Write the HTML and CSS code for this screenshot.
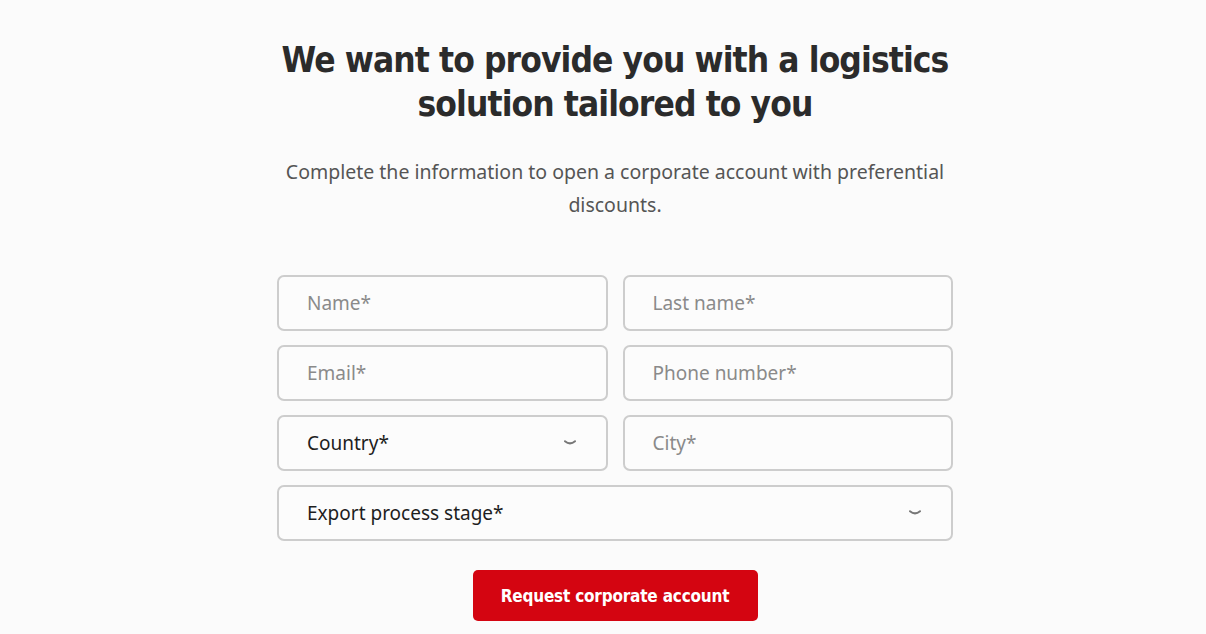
FILE: index.html
```html
<!DOCTYPE html>
<html lang="en">
<head>
<meta charset="utf-8">
<title>Corporate account</title>
<link rel="stylesheet" href="styles.css">
</head>
<body>
<main class="page">
  <section class="signup">
    <h1 class="title">We want to provide you with a logistics solution tailored to you</h1>
    <p class="lead">Complete the information to open a corporate account with preferential discounts.</p>
    <form class="form">
      <div class="grid">
        <input class="field" type="text" placeholder="Name*">
        <input class="field" type="text" placeholder="Last name*">
        <input class="field" type="email" placeholder="Email*">
        <input class="field" type="tel" placeholder="Phone number*">
        <div class="field select"><span>Country*</span>
          <svg class="chev" width="12" height="6" viewBox="0 0 12 6"><path d="M1 1.2 Q6 5.5 11 1.2" fill="none" stroke="#777" stroke-width="2" stroke-linecap="round"/></svg>
        </div>
        <input class="field" type="text" placeholder="City*">
        <div class="field select wide"><span>Export process stage*</span>
          <svg class="chev" width="12" height="6" viewBox="0 0 12 6"><path d="M1 1.2 Q6 5.5 11 1.2" fill="none" stroke="#777" stroke-width="2" stroke-linecap="round"/></svg>
        </div>
      </div>
      <div class="actions">
        <button class="btn" type="button">Request corporate account</button>
      </div>
    </form>
  </section>
</main>
</body>
</html>
```
FILE: styles.css
```css
html, body {
  margin: 0;
  padding: 0;
  background: #fbfbfb;
}
body {
  font-family: "Noto Sans", "Open Sans", sans-serif;
}
.page {
  padding: 0 0 0 24px;
}
.signup {
  width: 676px;
  margin: 0 auto;
  padding-top: 38px;
  display: flex;
  flex-direction: column;
  align-items: center;
}
.title {
  margin: 0;
  font-family: "DejaVu Sans Condensed", "Liberation Sans Narrow", sans-serif;
  font-weight: 700;
  font-size: 35px;
  line-height: 44px;
  color: #2b2b2b;
  text-align: center;
  letter-spacing: -0.9px;
  width: 700px;
}
.lead {
  margin: 29px 0 0;
  font-family: "Noto Sans", sans-serif;
  font-weight: 400;
  font-size: 19.5px;
  line-height: 33px;
  color: #555;
  text-align: center;
  width: 690px;
}
.form {
  width: 100%;
  margin-top: 54px;
}
.grid {
  display: grid;
  grid-template-columns: 1fr 1fr;
  column-gap: 15px;
  row-gap: 14px;
}
.field {
  box-sizing: border-box;
  height: 56px;
  width: 100%;
  border: 2px solid #cdcdcd;
  border-radius: 7px;
  background: #fcfcfc;
  padding: 0 28px;
  font-family: "Noto Sans", sans-serif;
  font-size: 19px;
  color: #1e1e1e;
  outline: none;
}
.field::placeholder {
  color: #8a8a8a;
}
.select {
  display: flex;
  align-items: center;
  justify-content: space-between;
  padding-right: 30px;
}
.select span {
  color: #1e1e1e;
}
.wide {
  grid-column: 1 / span 2;
}
.chev {
  display: block;
}
.actions {
  display: flex;
  justify-content: center;
  margin-top: 29px;
}
.btn {
  width: 285px;
  height: 51px;
  border: none;
  border-radius: 5px;
  background: #d40511;
  color: #fff;
  font-family: "DejaVu Sans Condensed", "Liberation Sans Narrow", sans-serif;
  font-weight: 700;
  font-size: 17px;
  letter-spacing: -0.2px;
}
```
